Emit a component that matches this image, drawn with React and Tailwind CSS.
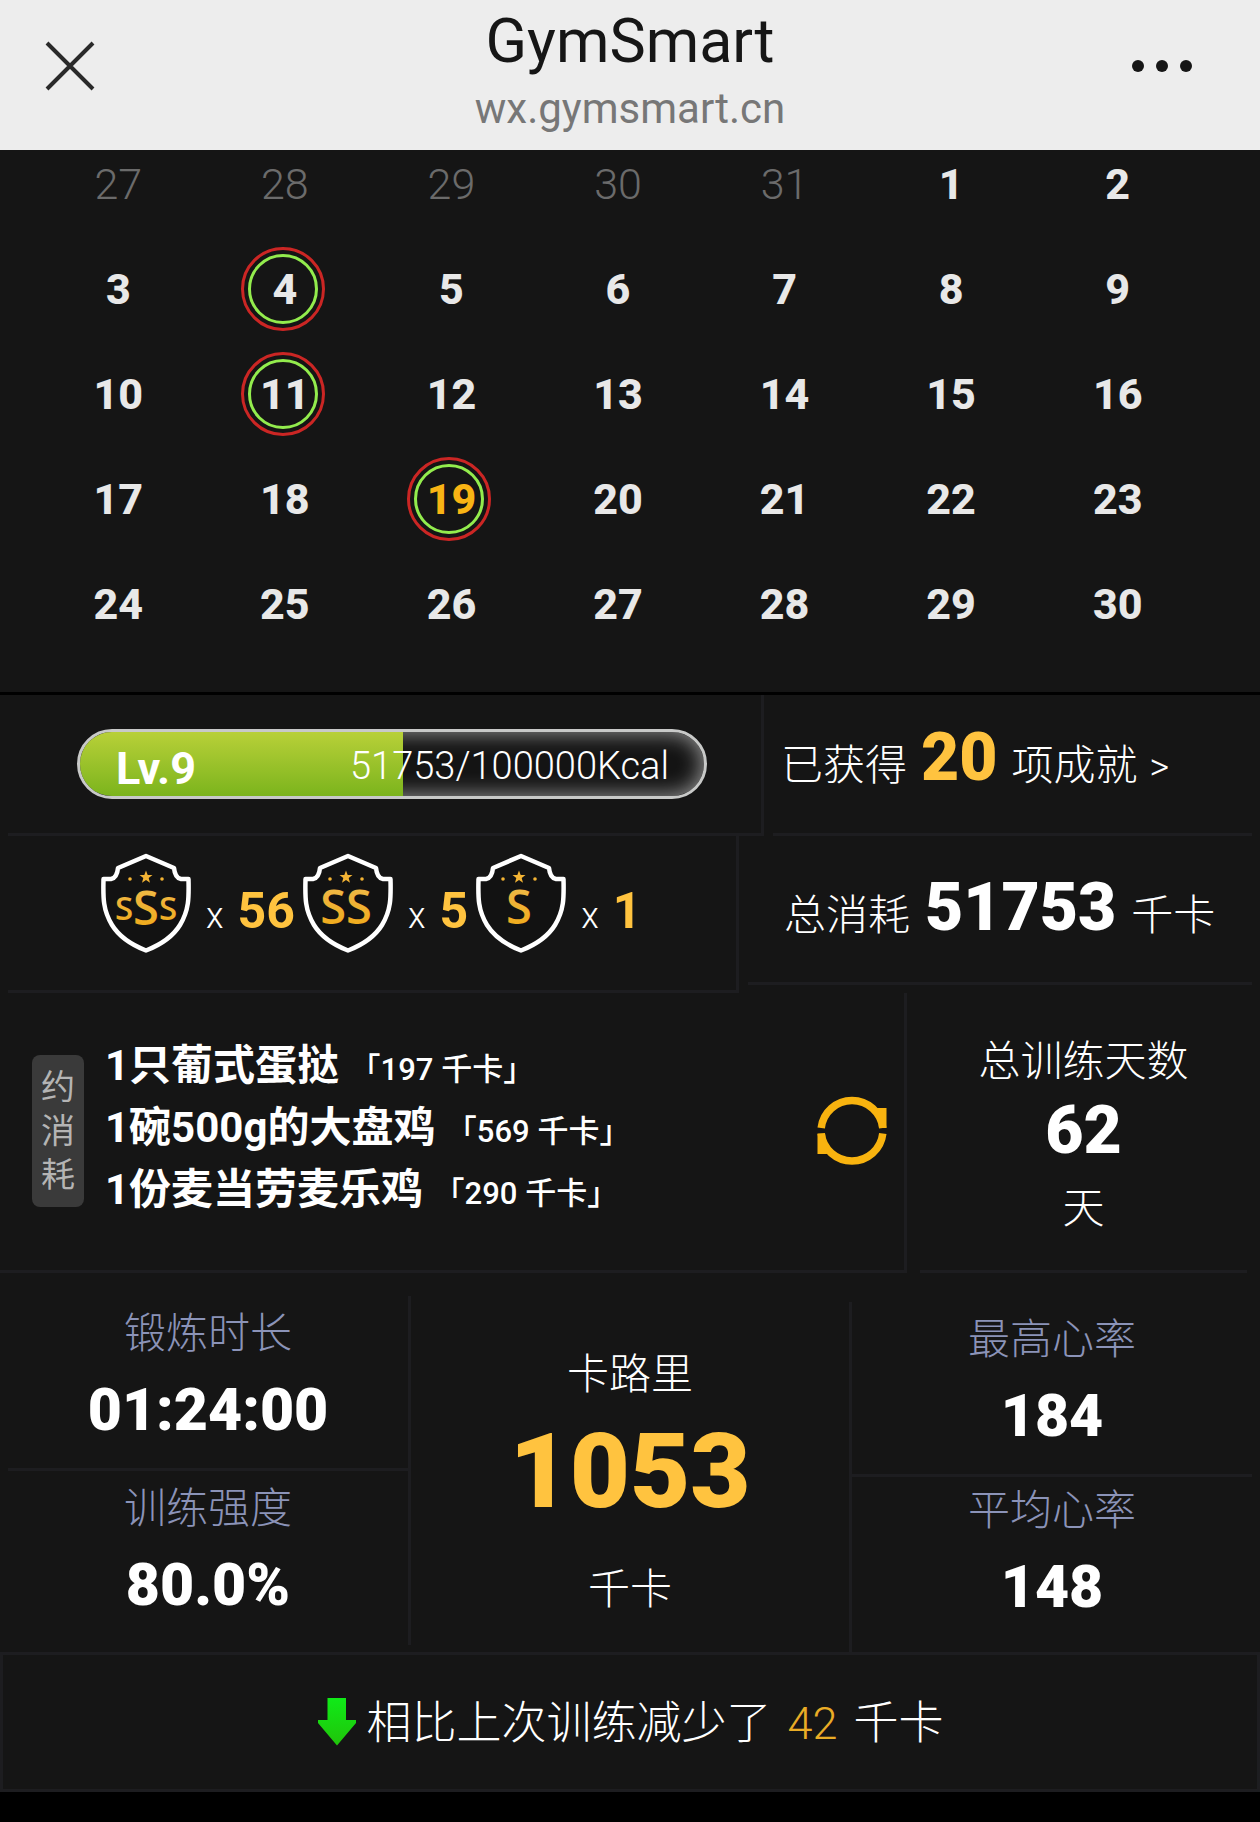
import { useState } from 'react';

const DAYS = [
  ...[27, 28, 29, 30, 31].map((d) => ({ key: `prev-${d}`, day: d, muted: true })),
  ...Array.from({ length: 30 }, (_, i) => ({ key: `cur-${i + 1}`, day: i + 1 })),
];
const TRAINED = [4, 11, 19];

const BADGES = [
  { rank: 'SSS', count: 56 },
  { rank: 'SS', count: 5 },
  { rank: 'S', count: 1 },
];

const FOODS = [
  { name: '1只葡式蛋挞', kcal: 197 },
  { name: '1碗500g的大盘鸡', kcal: 569 },
  { name: '1份麦当劳麦乐鸡', kcal: 290 },
];

function Header() {
  return (
    <header className="grid h-[150px] grid-cols-[1fr_auto_1fr] items-start bg-[#ededed] px-[44px]">
      <button aria-label="关闭" className="mt-[40px] justify-self-start">
        <svg width="52" height="52" viewBox="0 0 52 52" stroke="#2a2a2a" strokeWidth="4">
          <path d="M3 3 49 49M49 3 3 49" />
        </svg>
      </button>
      <div className="pt-1 text-center">
        <h1 className="text-[61px] leading-[74px] font-normal text-[#161616]">GymSmart</h1>
        <p className="mt-0.5 text-[42px] leading-[58px] text-[#777777]">wx.gymsmart.cn</p>
      </div>
      <button aria-label="更多" className="mt-[40px] justify-self-end px-[22px]">
        <svg width="64" height="52" viewBox="0 0 64 52" fill="#161616">
          <circle cx="8" cy="26" r="6" />
          <circle cx="32" cy="26" r="6" />
          <circle cx="56" cy="26" r="6" />
        </svg>
      </button>
    </header>
  );
}

function Calendar() {
  const [selected, setSelected] = useState(19);

  return (
    <section className="grid grid-cols-7 gap-y-[39px] border-b-3 border-black pt-px pr-[59px] pb-[55px] pl-[35px]">
      {DAYS.map(({ key, day, muted }) => {
        const ringed = !muted && TRAINED.includes(day);
        let color = 'font-extrabold text-[#e8e8e8]';
        if (muted) color = 'font-light text-[#6b6b6b]';
        else if (day === selected) color = 'font-extrabold text-[#f9b414]';
        return (
          <button
            key={key}
            disabled={muted}
            onClick={() => setSelected(day)}
            className={`relative h-[66px] text-[43px] leading-[66px] ${color}`}
          >
            {ringed && (
              <span className="absolute top-1/2 left-1/2 -ml-0.5 flex size-[84px] -translate-1/2 items-center justify-center rounded-full border-3 border-[#cb2624]">
                <span className="size-[70px] rounded-full border-3 border-[#93ec4d]" />
              </span>
            )}
            <span className="relative">{day}</span>
          </button>
        );
      })}
    </section>
  );
}

function LevelBar({ value, max }) {
  return (
    <div className="relative flex h-[70px] w-full items-center justify-between overflow-hidden rounded-full border-3 border-[#c8c9c8] bg-[#141414] pr-[35px] pl-[36px] shadow-[inset_0_0_22px_rgba(255,255,255,0.6)]">
      <div
        className="absolute inset-y-0 left-0 bg-linear-to-b from-[#b8d038] to-[#7bb41c]"
        style={{ width: `${(value / max) * 100}%` }}
      />
      <span className="relative pt-2.5 text-[45px] leading-[54px] font-bold">Lv.9</span>
      <span className="relative pt-1 text-[38px] leading-[54px] font-light">{value}/{max}Kcal</span>
    </div>
  );
}

function Shield({ rank }) {
  const x = rank === 'SSS' ? 45 : 43;
  return (
    <svg width="90" height="100" viewBox="0 0 90 100" role="img" aria-label={rank}>
      <defs>
        <linearGradient id={`gold-${rank}`} x1="0" y1="0" x2="0" y2="1">
          <stop offset="0" stopColor="#efbd55" />
          <stop offset="1" stopColor="#f0a70f" />
        </linearGradient>
      </defs>
      <path
        d="M45 3 73 15Q74 25 80 26H87.500C88 45 88 57 79 72 71 85 59 92 45 97.500 31 92 19 85 11 72 2 57 2 45 2.500 26H10Q16 25 17 15Z"
        fill="#121212"
        stroke="#ffffff"
        strokeWidth="4.500"
        strokeLinejoin="round"
      />
      <g fill="#f4b434">
        <path
          transform={`translate(${x} 24)`}
          d="M0-6.500 1.700-2 6.500-2 2.700 1 4 5.800 0 3-4 5.800-2.700 1-6.500-2-1.700-2Z"
        />
        <circle cx={x - 16} cy="26" r="1.800" />
        <circle cx={x + 16} cy="26" r="1.800" />
      </g>
      <g
        fill={`url(#gold-${rank})`}
        textAnchor="middle"
        fontFamily="'Open Sans', 'Noto Sans', sans-serif"
        fontWeight="600"
      >
        {rank === 'SSS' ? (
          <text x="45" y="67" fontSize="33">
            S<tspan fontSize="47" dy="5">S</tspan><tspan dy="-5">S</tspan>
          </text>
        ) : (
          <text x={x} y="71" fontSize="47">{rank}</text>
        )}
      </g>
    </svg>
  );
}

function Stat({ label, value, className }) {
  return (
    <div className={className}>
      <p className="text-[42px] leading-[60px] font-light text-[#8b93b8]">{label}</p>
      <p className="mt-1.5 text-[59px] leading-[80px] font-black">{value}</p>
    </div>
  );
}

function Summary() {
  return (
    <section>
      <div className="grid h-[141px] grid-cols-[764fr_496fr]">
        <div className="ml-2 flex items-center border-r-3 border-b-3 border-[#1d1d20] pr-[54px] pl-[69px]">
          <LevelBar value={51753} max={100000} />
        </div>
        <a
          href="#achievements"
          className="mr-2 ml-[9px] flex items-baseline border-b-3 border-[#1d1d20] pt-[23px] pl-2 text-[42px] leading-[80px] font-light whitespace-nowrap"
        >
          已获得
          <strong className="mx-3.5 text-[66px] font-black text-[#ffc33f]">20</strong>
          项成就
          <span className="ml-3 text-[38px]">&gt;</span>
        </a>
      </div>

      <div className="grid grid-cols-[739fr_521fr] items-start">
        <div className="ml-2 flex h-[157px] items-start gap-2 border-r-3 border-b-3 border-[#1d1d20] pt-[17px] pl-[93px]">
          {BADGES.map((b) => (
            <div key={b.rank} className="flex items-end gap-[15px]">
              <Shield rank={b.rank} />
              <p className="flex items-baseline gap-3.5 pb-[7px] leading-[60px]">
                <span className="text-[36px] font-light">x</span>
                <span className="text-[50px] font-bold text-[#ffc33f]">{b.count}</span>
              </p>
            </div>
          ))}
        </div>
        <p className="mr-2 ml-[9px] flex h-[149px] items-baseline border-b-3 border-[#1d1d20] pt-[32px] pl-[36px] text-[42px] leading-[80px] font-light whitespace-nowrap">
          总消耗
          <strong className="mx-[15px] text-[66px] font-black">51753</strong>
          千卡
        </p>
      </div>
    </section>
  );
}

function Foods() {
  const [offset, setOffset] = useState(0);
  const foods = FOODS.map((_, i) => FOODS[(i + offset) % FOODS.length]);

  return (
    <section className="grid h-[280px] grid-cols-[907fr_353fr]">
      <div className="flex items-center border-r-3 border-b-3 border-[#1d1d20] pr-[17px] pb-0.5 pl-[32px]">
        <p className="w-[52px] shrink-0 rounded-lg bg-[#3a3a3a] px-2 py-[10px] text-center text-[34px] leading-[44px] text-[#b4b4b4]">
          约消耗
        </p>
        <ul className="mb-1.5 ml-[21px] text-[42px] leading-[62px] font-bold whitespace-nowrap">
          {foods.map((f) => (
            <li key={f.name} className="h-[62px]">
              {f.name} <span className="text-[31px] leading-none font-medium">「{f.kcal} 千卡」</span>
            </li>
          ))}
        </ul>
        <button aria-label="换一批" className="ml-auto" onClick={() => setOffset(offset + 1)}>
          <svg width="70" height="70" viewBox="0 0 70 70" fill="none" stroke="#f8b30f" strokeWidth="7.500">
            <path d="M4.200 32A31 31 0 0 1 65.800 32M65.800 37.500A31 31 0 0 1 4.200 37.500" />
            <path d="M60 12H69.500V32H62Z M10 58H.500V37.500H8Z" fill="#f8b30f" stroke="none" />
          </svg>
        </button>
      </div>
      <div className="mr-[13px] ml-[13px] border-b-3 border-[#1d1d20] pt-[43px] text-center font-light">
        <p className="text-[42px] leading-[52px]">总训练天数</p>
        <p className="text-[66px] leading-[86px] font-black">62</p>
        <p className="text-[42px] leading-[70px]">天</p>
      </div>
    </section>
  );
}

function Session() {
  return (
    <section className="grid grid-cols-[411fr_438fr_411fr] text-center">
      <div className="mt-[23px] mb-[7px] border-r-3 border-[#1d1d20]">
        <Stat label="锻炼时长" value="01:24:00" className="ml-2 h-[175px] border-b-3 border-[#1d1d20] pt-2" />
        <Stat label="训练强度" value="80.0%" className="ml-2 h-[174px] pt-2" />
      </div>
      <div className="pt-[72px] font-light">
        <p className="text-[42px] leading-[60px]">卡路里</p>
        <p className="text-[104px] leading-[134px] font-black text-[#ffc33f]">1053</p>
        <p className="text-[42px] leading-[102px]">千卡</p>
      </div>
      <div className="mt-[29px] border-l-3 border-[#1d1d20] pr-2">
        <Stat label="最高心率" value="184" className="h-[175px] border-b-3 border-[#1d1d20] pt-2" />
        <Stat label="平均心率" value="148" className="h-[175px] pt-1" />
      </div>
    </section>
  );
}

export default function App() {
  return (
    <div className="min-h-screen bg-black font-['Roboto','Noto_Sans_CJK_SC',sans-serif] text-white">
      <Header />
      <main className="bg-[#151515]">
        <Calendar />
        <Summary />
        <Foods />
        <Session />
        <p className="flex h-[140px] items-center justify-center border-3 border-[#1d1d20] text-[45px] leading-[60px] font-light">
          <svg width="40" height="48" viewBox="0 0 40 48" className="mr-2.5" aria-hidden="true">
            <defs>
              <linearGradient id="drop" x1="0" y1="0" x2="0" y2="1">
                <stop offset="0" stopColor="#10ea18" />
                <stop offset="1" stopColor="#20c40a" />
              </linearGradient>
            </defs>
            <path d="M10.500 0H29V22H39V25L20 47.500 1 25V22H10.500Z" fill="url(#drop)" />
          </svg>
          <span className="pt-1">
            相比上次训练减少了
            <span className="mx-4 text-[#e9ac26]">42</span>
            千卡
          </span>
        </p>
      </main>
    </div>
  );
}
